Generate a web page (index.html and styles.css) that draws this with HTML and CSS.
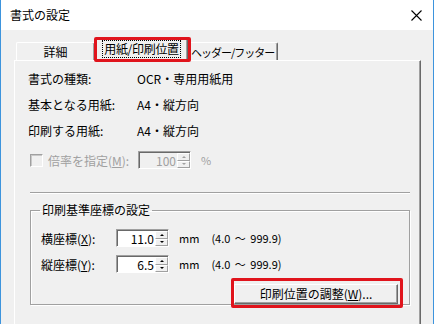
FILE: index.html
```html
<!DOCTYPE html>
<html lang="ja">
<head>
  <meta charset="UTF-8">
  <title>書式の設定</title>
  <link rel="stylesheet" href="styles.css">
</head>
<body>

  <div class="window">
    <div class="titlebar">
      <span class="title">書式の設定</span>
      <svg class="close" width="11" height="11" viewBox="0 0 11 11">
        <path d="M0.5 0.5 L10.5 10.5 M10.5 0.5 L0.5 10.5" stroke="#000" stroke-width="1.1" fill="none"/>
      </svg>
    </div>

    <div class="dialog">
      <div class="tabs">
        <div class="tab first">詳細</div>
        <div class="tab active">
          <span class="focus">用紙/印刷位置</span>
          <span class="mark mark-tab"></span>
        </div>
        <div class="tab last">ヘッダー/フッター</div>
      </div>

      <div class="panel">
        <div class="info">
          <div class="row"><span class="label">書式の種類:</span><span>OCR・専用用紙用</span></div>
          <div class="row"><span class="label">基本となる用紙:</span><span>A4・縦方向</span></div>
          <div class="row"><span class="label">印刷する用紙:</span><span>A4・縦方向</span></div>
        </div>

        <div class="row scale">
          <span class="check"></span>
          <span class="scale-label">倍率を指定(<u>M</u>):</span>
          <div class="spin off">
            <span class="val">100</span>
            <span class="arrows"><i class="up"></i><i class="down"></i></span>
          </div>
          <span class="unit">%</span>
        </div>

        <div class="sep"></div>

        <fieldset class="group">
          <legend>印刷基準座標の設定</legend>

          <div class="coord">
            <span class="clabel">横座標(<u>X</u>):</span>
            <div class="spin">
              <span class="val">11.0</span>
              <span class="arrows"><i class="up"></i><i class="down"></i></span>
            </div>
            <span class="mm">mm</span>
            <span class="range">(4.0 ～ 999.9)</span>
          </div>

          <div class="coord">
            <span class="clabel">縦座標(<u>Y</u>):</span>
            <div class="spin">
              <span class="val">6.5</span>
              <span class="arrows"><i class="up"></i><i class="down"></i></span>
            </div>
            <span class="mm">mm</span>
            <span class="range">(4.0 ～ 999.9)</span>
          </div>

          <div class="actions">
            <div class="btn-wrap">
              <button class="btn">印刷位置の調整(<u>W</u>)...</button>
              <span class="mark mark-btn"></span>
            </div>
          </div>
        </fieldset>
      </div>
    </div>
  </div>

</body>
</html>
```

FILE: styles.css
```css
body {
  margin: 0;
  font-family: "Noto Sans CJK JP", sans-serif;
  font-size: 12px;
  color: #000;
  background: #fff;
}
u {
  text-decoration: underline;
  text-underline-offset: 1px;
}
.window {
  width: 434px;
  height: 324px;
  box-sizing: border-box;
  border-left: 1px solid #3d94dd;
  border-right: 1px solid #3d94dd;
  background: #f0f0f0;
  overflow: hidden;
}
.titlebar {
  height: 30px;
  background: #fff;
  display: flex;
  align-items: center;
  justify-content: space-between;
  padding: 0 11px 0 9px;
}
.title {
  line-height: 14px;
}
.dialog {
  padding: 8px 12px 0 13px;
}

/* tabs */
.tabs {
  display: flex;
  align-items: flex-end;
  height: 22px;
  padding-left: 2px;
}
.tab {
  position: relative;
  box-sizing: border-box;
  width: 79px;
  height: 18px;
  border-top: 1px solid #fff;
  border-left: 1px solid #fff;
  border-right: 1px solid #696969;
  box-shadow: inset -1px 0 #a0a0a0;
  border-radius: 2px 2px 0 0;
  display: flex;
  align-items: center;
  justify-content: center;
  line-height: 14px;
  white-space: nowrap;
}
.tab.last {
  width: auto;
  padding: 0 3px 0 2px;
  font-size: 11px;
  letter-spacing: -1px;
}
.tab.active {
  width: 93px;
  height: 23px;
  margin-bottom: -1px;
  z-index: 1;
  background: #f0f0f0;
  padding-bottom: 3px;
  letter-spacing: -0.3px;
}
.focus {
  border: 1px dotted #000;
  padding: 1px 1px;
  line-height: 14px;
}
.mark {
  position: absolute;
  border: 3px solid #e0141c;
  border-radius: 2px;
  pointer-events: none;
}
.mark-tab {
  top: -2px;
  left: -2px;
  right: -4px;
  bottom: -1px;
}

/* panel */
.panel {
  height: 270px;
  border-top: 1px solid #fff;
  border-left: 1px solid #fff;
  border-right: 1px solid #696969;
  box-shadow: inset -1px 0 #a0a0a0;
}
.info {
  padding: 4px 0 0 13px;
}
.row {
  display: flex;
  align-items: center;
  height: 26px;
}
.label {
  width: 109px;
}
.scale {
  margin-top: 7px;
  padding-left: 15px;
  height: 20px;
  color: #a0a0a0;
}
.check {
  width: 11px;
  height: 11px;
  border: 1px solid;
  border-color: #a0a0a0 #fff #fff #a0a0a0;
  box-shadow: inset 1px 1px #c8c8c8;
  margin-right: 5px;
}
.scale-label {
  width: 90px;
}

/* spin boxes */
.spin {
  box-sizing: border-box;
  width: 53px;
  height: 18px;
  display: flex;
  align-items: stretch;
  background: #fff;
  border: 1px solid;
  border-color: #a0a0a0 #fff #fff #a0a0a0;
  box-shadow: inset 1px 1px #696969;
  padding: 1px 0 0 1px;
}
.spin.off {
  background: #f0f0f0;
  color: #a0a0a0;
}
.val {
  flex: 1;
  text-align: right;
  line-height: 15px;
  padding-right: 1px;
}
.arrows {
  width: 13px;
  display: flex;
  flex-direction: column;
}
.arrows i {
  flex: 1;
  background: #f0f0f0;
  border-top: 1px solid #fff;
  border-left: 1px solid #fff;
  border-bottom: 1px solid #a0a0a0;
  border-right: 1px solid #a0a0a0;
  display: flex;
  align-items: center;
  justify-content: center;
}
.arrows i::after {
  content: "";
  border-left: 2px solid transparent;
  border-right: 2px solid transparent;
}
.arrows .up::after {
  border-bottom: 2px solid #000;
}
.arrows .down::after {
  border-top: 2px solid #000;
}
.spin.off .arrows i::after {
  border-top-color: #a0a0a0;
  border-bottom-color: #a0a0a0;
}
.unit {
  margin-left: 10px;
  font-size: 11px;
}

/* separator and group */
.sep {
  margin: 22px 10px 0 15px;
  height: 1px;
  background: #a0a0a0;
  border-bottom: 1px solid #fff;
}
.group {
  margin: 9px 10px 0 15px;
  padding: 0 11px 6px 9px;
  border: 1px solid #a0a0a0;
  box-shadow: inset 1px 1px #fff, 1px 1px #fff;
  height: 102px;
  box-sizing: border-box;
}
.group legend {
  padding: 0 2px;
  line-height: 14px;
}
.coord {
  display: flex;
  align-items: center;
  height: 18px;
  margin-top: 8px;
  padding-left: 1px;
}
.coord:first-of-type {
  margin-top: 12px;
}
.clabel {
  width: 75px;
}
.mm {
  margin-left: 10px;
  font-size: 11px;
}
.range {
  margin-left: 12px;
  font-size: 11px;
  word-spacing: 2px;
}
.actions {
  display: flex;
  justify-content: flex-end;
  margin-top: 11px;
}
.btn-wrap {
  position: relative;
}
.btn {
  width: 164px;
  height: 20px;
  padding: 0;
  font-family: inherit;
  font-size: 12px;
  line-height: 14px;
  color: #000;
  background: #f0f0f0;
  border: 1px solid;
  border-color: #fff #696969 #696969 #fff;
  box-shadow: inset -1px -1px #a0a0a0;
  border-radius: 0;
}
.mark-btn {
  top: -6px;
  left: -3px;
  right: -5px;
  bottom: -4px;
}
```
